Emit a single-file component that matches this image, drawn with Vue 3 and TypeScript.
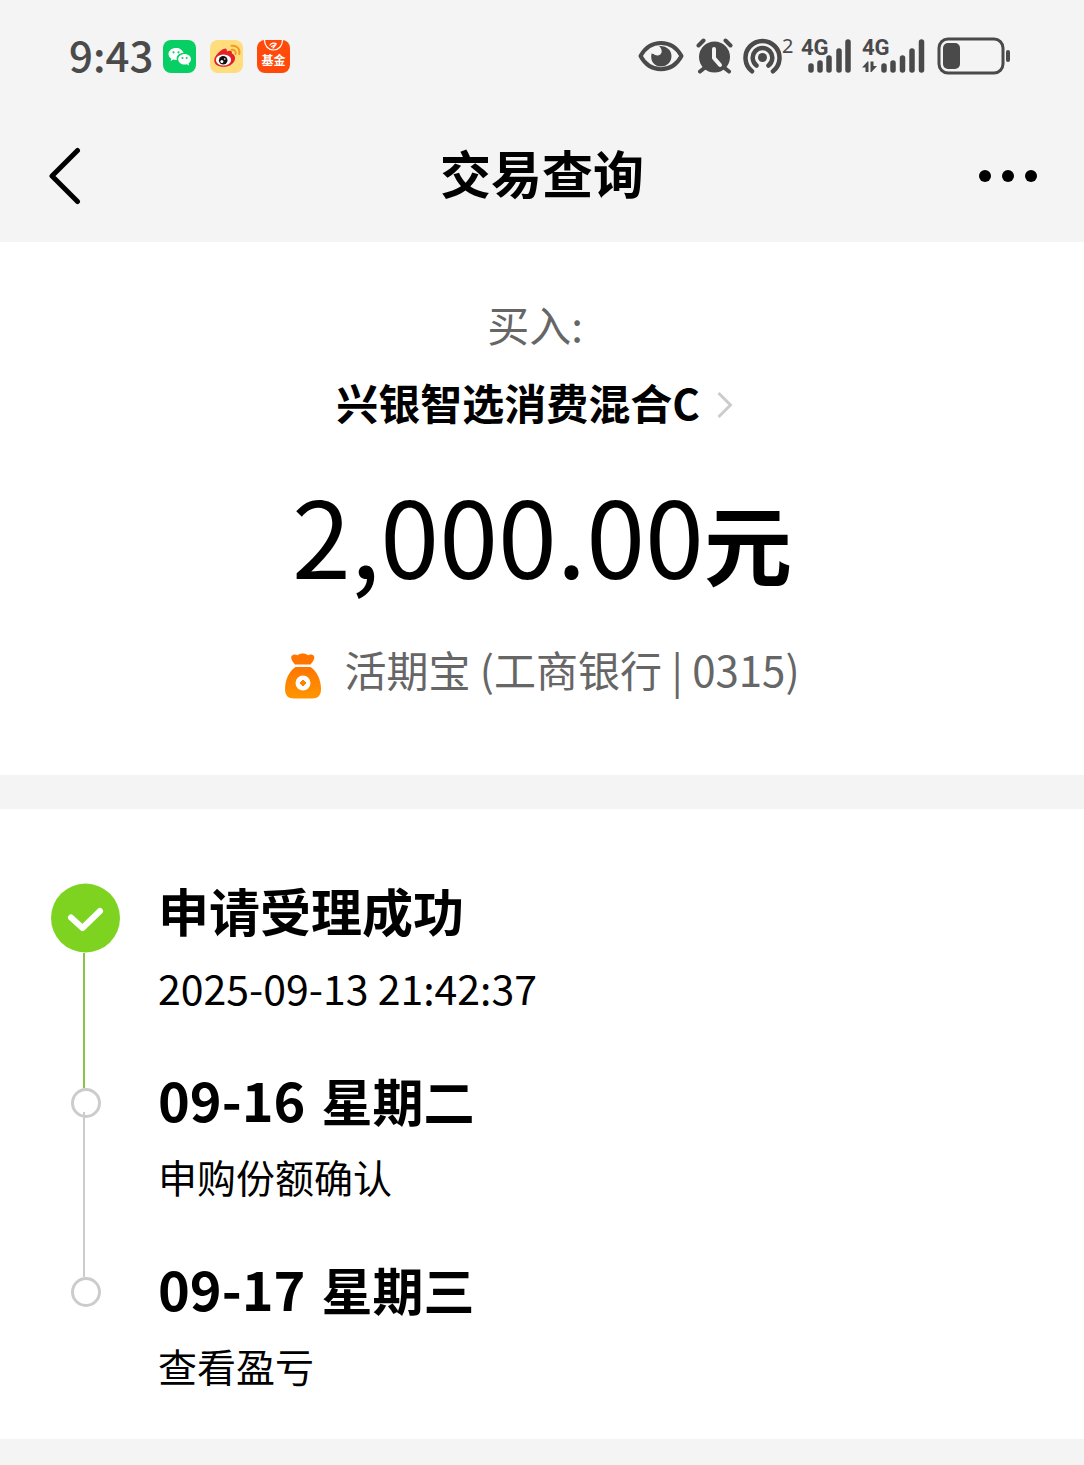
<script setup lang="ts">
interface Step {
  title: string
  weekday?: string
  detail: string
  state: 'done' | 'pending'
}

const steps: Step[] = [
  { title: '申请受理成功', detail: '2025-09-13 21:42:37', state: 'done' },
  { title: '09-16', weekday: '星期二', detail: '申购份额确认', state: 'pending' },
  { title: '09-17', weekday: '星期三', detail: '查看盈亏', state: 'pending' },
]
</script>

<template>
  <div class="page">
    <div class="status">
      <div class="status-left">
        <span class="clock">9:43</span>
        <svg class="app" viewBox="0 0 33 33" aria-hidden="true">
          <rect width="33" height="33" rx="8" fill="#07cf63" />
          <path d="M13 8C8.600 8 5.500 10.700 5.500 14c0 1.900 1 3.500 2.700 4.600L7.600 21l2.700-1.400c.9.2 1.800.4 2.700.4h.8c-.9-4.300 2.700-7 6.800-6.900C19.800 10.100 16.800 8 13 8z" fill="#fff" />
          <path d="M21.600 14c-3.600 0-6.400 2.300-6.400 5.300s2.800 5.300 6.400 5.300c.8 0 1.500-.1 2.200-.3l2.300 1.200-.6-2c1.500-1 2.500-2.500 2.500-4.200 0-3-2.800-5.300-6.400-5.300z" fill="#fff" />
          <g fill="#07cf63"><circle cx="10.500" cy="12.300" r="1.100" /><circle cx="15.500" cy="12.300" r="1.100" /><circle cx="19.500" cy="18" r="1" /><circle cx="23.700" cy="18" r="1" /></g>
        </svg>
        <svg class="app" viewBox="0 0 33 33" aria-hidden="true">
          <rect width="33" height="33" rx="8" fill="#ffdc7c" />
          <path d="M13.500 9c2.200-1.100 3.700-.5 3.300 2.300 3.300-1.300 5.800-.8 5 2.200 6.200 2.500 3.600 13-8 13.300C8 26.900 4 24 4.200 20.200 4.500 15.900 9.500 10.800 13.500 9z" fill="#e6202b" />
          <ellipse cx="13.500" cy="20" rx="7.600" ry="5.600" fill="#fff" />
          <circle cx="13.200" cy="20.300" r="4.300" fill="#111" />
          <circle cx="11.900" cy="21.500" r="1.500" fill="#fff" /><circle cx="14.700" cy="19" r=".8" fill="#fff" />
          <path d="M21.500 9.700c3-.4 4.600 1.400 4.100 4.200M21.500 5.700c5.500-.5 8.800 3.300 7.800 8.400" fill="none" stroke="#f49a22" stroke-width="2" stroke-linecap="round" />
        </svg>
        <svg class="app" viewBox="0 0 33 33" aria-hidden="true">
          <rect width="33" height="33" rx="8" fill="#ff4a0b" />
          <path d="M7.500 0c0 6 4 10 9 10s9-4 9-10" fill="none" stroke="#fff" stroke-width="1.200" />
          <path d="M13 5c1.500-2 4.500-2.500 6.500-1M14.500 6.500l3-1.500M16 8l2.500-3" fill="none" stroke="#fff" stroke-width="1.200" stroke-linecap="round" />
          <text x="16.500" y="25" text-anchor="middle" class="app-text">基金</text>
        </svg>
      </div>
      <div class="status-right">
        <svg width="46" height="34" viewBox="0 0 46 34" aria-hidden="true">
          <path d="M2.500 17C12 -.5 34 -.5 43.500 17 34 34.500 12 34.500 2.500 17z" fill="none" stroke="#4a4a4a" stroke-width="4" stroke-linejoin="round" />
          <path d="M21 7C25.500 11 24 16.500 19.500 16.500c-2.500 0-3-1.500-6-2C12 22 16 27.500 23 27.500c6 0 10.500-4.500 10.500-10.500C33.500 11 28.500 6.500 21 7z" fill="#4a4a4a" />
        </svg>
        <svg class="alarm" width="37" height="36" viewBox="0 0 37 36" aria-hidden="true">
          <circle cx="18.500" cy="19" r="15.500" fill="#4a4a4a" />
          <path d="M2.500 7.500l5-5M34.500 7.500l-5-5M4 33.500l5-4M33 33.500l-5-4" stroke="#4a4a4a" stroke-width="4" stroke-linecap="round" />
          <path d="M18 11V20l6 7" fill="none" stroke="#f4f4f4" stroke-width="4" stroke-linecap="round" stroke-linejoin="round" />
        </svg>
        <svg class="hotspot" width="52" height="48" viewBox="0 -6 52 48" aria-hidden="true">
          <circle cx="19.500" cy="19.500" r="4.500" fill="#4a4a4a" />
          <path d="M9 33.300A17 17 0 1 1 30 33.300M13.500 27.500A9.800 9.800 0 1 1 25.500 27.500" fill="none" stroke="#4a4a4a" stroke-width="4.500" stroke-linecap="round" />
          <text x="39" y="15" class="tiny">2</text>
        </svg>
        <svg class="signal" width="51" height="48" viewBox="0 -6 51 48" aria-hidden="true">
          <text x="0" y="17" class="net">4G</text>
          <path d="M10 28v4M19 25v7M28 20v12M38 13v19M47 4v28" stroke="#4a4a4a" stroke-width="5.500" stroke-linecap="round" />
        </svg>
        <svg class="signal" width="63" height="48" viewBox="0 -6 63 48" aria-hidden="true">
          <text x="0" y="17" class="net">4G</text>
          <path d="M22 28v4M31 25v7M40.500 20v12M50 13v19M59.500 4v28" stroke="#4a4a4a" stroke-width="5.500" stroke-linecap="round" />
          <path d="M0 29.500L5.500 23.500h1V34h-3v-4.500zM8.500 23.500h3V28h3.500L9.500 34h-1z" fill="#4a4a4a" />
        </svg>
        <svg class="battery" width="74" height="38" viewBox="0 0 74 38" aria-hidden="true">
          <rect x="2" y="2" width="64" height="34" rx="9" fill="none" stroke="#4a4a4a" stroke-width="3" />
          <rect x="6" y="6" width="17" height="26" rx="5" fill="#4a4a4a" />
          <rect x="69" y="13" width="4" height="12" rx="2" fill="#4a4a4a" />
        </svg>
      </div>
    </div>

    <header class="nav">
      <button class="icon-btn" type="button" aria-label="返回">
        <svg width="34" height="60" viewBox="0 0 34 60"><path d="M30.500 4.500L5 30l25.500 25.500" fill="none" stroke="#000" stroke-width="5" stroke-linecap="round" stroke-linejoin="round" /></svg>
      </button>
      <h1>交易查询</h1>
      <button class="icon-btn more" type="button" aria-label="更多">
        <svg width="58" height="60" viewBox="0 0 58 60"><circle cx="6" cy="30" r="6" /><circle cx="29" cy="30" r="6" /><circle cx="52" cy="30" r="6" /></svg>
      </button>
    </header>

    <main>
      <section class="summary">
        <p class="kind">买入:</p>
        <a class="fund" href="#">
          兴银智选消费混合C
          <svg width="18" height="36" viewBox="0 -6 18 36" aria-hidden="true"><path d="M2.500 3L14.500 15 2.500 27" fill="none" stroke="#ccc" stroke-width="3" /></svg>
        </a>
        <p class="amount">2,000.00<span class="unit">元</span></p>
        <p class="pay">
          <svg width="38" height="46" viewBox="0 0 38 46" aria-hidden="true">
            <defs>
              <linearGradient id="bag" x1="0" y1="0" x2="0" y2="1"><stop offset="0" stop-color="#ff7500" /><stop offset="1" stop-color="#ff9600" /></linearGradient>
            </defs>
            <path d="M11 11.500C8 8 6.500 5 7.500 3c1.300-2 4.500-2 6-.7 2.500-2.500 8-2.500 10.500 0 1.600-1.300 5-1.300 6 .7 1 2-.5 5-3.500 8.500z" fill="#ff7500" />
            <path d="M11.500 14h15C33 18.500 37 27 37 36c0 6.500-3 9.500-9 9.500H10c-6 0-9-3-9-9.500C1 27 5 18.500 11.500 14z" fill="url(#bag)" />
            <circle cx="19" cy="30" r="7.500" fill="#fff" />
            <path d="M19 27L22 30 19 33 16 30z" fill="#ff8200" stroke="#ff8200" stroke-width="1" stroke-linejoin="round" />
          </svg>
          <span>活期宝 (工商银行 | 0315)</span>
        </p>
      </section>

      <ol class="timeline">
        <li v-for="step in steps" :key="step.title" :class="['step', step.state]">
          <div class="rail">
            <span class="lead"></span>
            <svg v-if="step.state === 'done'" class="check" viewBox="0 0 70 70" aria-hidden="true">
              <circle cx="34.500" cy="35" r="34.500" fill="#7ed321" />
              <path d="M20 34.500L31.500 45 49 28" fill="none" stroke="#fff" stroke-width="6" stroke-linecap="round" stroke-linejoin="round" />
            </svg>
            <span v-else class="ring"></span>
            <span class="tail"></span>
          </div>
          <div class="body">
            <h2><span :class="{ date: step.weekday }">{{ step.title }}</span><span v-if="step.weekday">{{ step.weekday }}</span></h2>
            <p>{{ step.detail }}</p>
          </div>
        </li>
      </ol>
    </main>
  </div>
</template>

<style>
body {
  margin: 0;
  background: #f4f4f4;
}
</style>

<style scoped>
.page {
  min-height: 100vh;
  background: #f4f4f4;
  color: #000;
  font-family: "Noto Sans CJK SC", "Noto Sans", sans-serif;
}

h1, h2, p, ol {
  margin: 0;
  padding: 0;
}

.status {
  display: flex;
  justify-content: space-between;
  align-items: center;
  height: 112px;
  padding: 0 73px 0 69px;
}

.status-left, .status-right {
  display: flex;
  align-items: center;
}

.clock {
  margin-right: 10px;
  padding-bottom: 4px;
  font-size: 42px;
  line-height: 60px;
  font-weight: 500;
  color: #4a4a4a;
}

.app {
  width: 33px;
  height: 33px;
}

.app + .app {
  margin-left: 14px;
}

.app-text {
  font-size: 12px;
  font-weight: 700;
  fill: #fff;
}

.alarm, .battery {
  margin-left: 12px;
}

.hotspot, .signal + .signal {
  margin-left: 10px;
}

.signal {
  margin-left: 6px;
}

.tiny {
  font-family: "Noto Sans", sans-serif;
  font-size: 20px;
  fill: #4a4a4a;
}

.net {
  font-family: "Liberation Sans Narrow", Roboto, sans-serif;
  font-size: 22px;
  font-weight: 700;
  fill: #4a4a4a;
}

.nav {
  box-sizing: border-box;
  display: flex;
  justify-content: space-between;
  align-items: center;
  height: 130px;
  padding: 0 47px 2px;
}

.icon-btn {
  display: flex;
  width: 60px;
  padding: 0;
  border: 0;
  background: none;
}

.more {
  justify-content: flex-end;
}

h1 {
  padding-bottom: 8px;
  font-size: 51px;
  line-height: 70px;
  font-weight: 700;
}

.summary {
  display: flex;
  flex-direction: column;
  align-items: center;
  padding: 52px 0 76px;
  background: #fff;
}

.kind, .pay {
  font-size: 42px;
  line-height: 60px;
  color: #666;
}

.kind, .fund {
  padding-right: 14px;
}

.fund {
  display: flex;
  align-items: center;
  gap: 16px;
  margin-top: 18px;
  font-size: 42px;
  line-height: 60px;
  font-weight: 700;
  color: #000;
  text-decoration: none;
}

.amount {
  margin-top: 41px;
  font-size: 106px;
  line-height: 120px;
}

.unit {
  font-size: 88px;
  line-height: 88px;
  font-weight: 700;
}

.pay {
  display: flex;
  align-items: flex-end;
  gap: 22px;
  margin-top: 46px;
}

.timeline {
  margin-top: 34px;
  padding: 66px 51px 49px;
  background: #fff;
  list-style: none;
}

.step {
  display: flex;
  gap: 37px;
}

.rail {
  display: flex;
  flex-direction: column;
  width: 70px;
}

.lead, .tail {
  width: 2px;
  margin-left: 32px;
  background: #ccc;
}

.lead {
  height: 24px;
}

.tail {
  flex: 1;
  margin-top: -6px;
}

.done .lead {
  height: 8px;
  background: none;
}

.done .tail, .done + .step .lead {
  background: #8bc34a;
}

.done .tail {
  margin-top: 0;
}

.step:last-child .tail {
  background: none;
}

.check {
  width: 70px;
  height: 70px;
}

.ring {
  box-sizing: border-box;
  width: 30px;
  height: 30px;
  margin-left: 20px;
  border: 3px solid #ccc;
  border-radius: 50%;
}

.body {
  padding-bottom: 52px;
}

.step:last-child .body {
  padding-bottom: 0;
}

h2 {
  display: flex;
  align-items: baseline;
  gap: 16px;
  height: 70px;
  font-size: 51px;
  line-height: 70px;
  font-weight: 700;
}

.date {
  font-size: 54px;
}

.body p {
  margin-top: 17px;
  font-size: 39px;
  line-height: 50px;
}

.done .body p {
  font-size: 41px;
}
</style>
